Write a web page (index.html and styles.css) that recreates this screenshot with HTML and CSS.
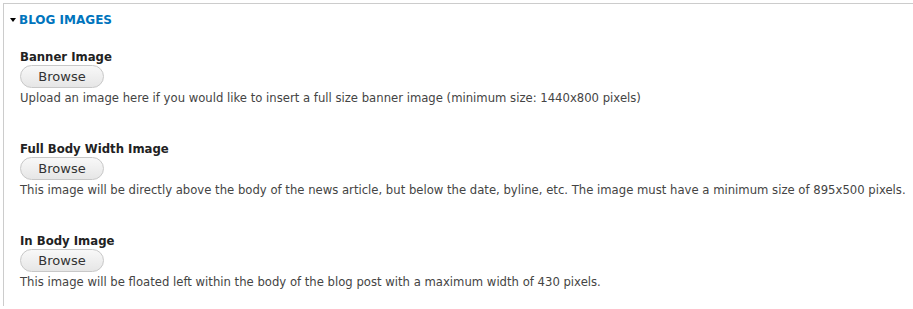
FILE: index.html
```html
<!DOCTYPE html>
<html>
<head>
<meta charset="utf-8">
<link rel="stylesheet" href="styles.css">
</head>
<body>
<div class="page">
  <details class="fieldset" open>
    <summary class="legend"><span class="arrow"></span>BLOG IMAGES</summary>
    <div class="wrapper">
      <div class="item">
        <label class="label">Banner Image</label>
        <button class="browse" type="button">Browse</button>
        <div class="desc">Upload an image here if you would like to insert a full size banner image (minimum size: 1440x800 pixels)</div>
      </div>
      <div class="item">
        <label class="label">Full Body Width Image</label>
        <button class="browse" type="button">Browse</button>
        <div class="desc">This image will be directly above the body of the news article, but below the date, byline, etc. The image must have a minimum size of 895x500 pixels.</div>
      </div>
      <div class="item">
        <label class="label">In Body Image</label>
        <button class="browse" type="button">Browse</button>
        <div class="desc">This image will be floated left within the body of the blog post with a maximum width of 430 pixels.</div>
      </div>
    </div>
  </details>
</div>
</body>
</html>
```
FILE: styles.css
```css
html, body {
  margin: 0;
  padding: 0;
  background: #fff;
}
body {
  font-family: "DejaVu Sans", "Noto Sans", sans-serif;
  color: #333;
  overflow: hidden;
  height: 309px;
}
.page {
  padding: 3px 0 0 3px;
  height: 306px;
  box-sizing: border-box;
}
.fieldset {
  border-top: 1px solid #ccc;
  border-left: 1px solid #ccc;
  height: 100%;
  box-sizing: border-box;
}
.legend {
  list-style: none;
  display: flex;
  align-items: center;
  height: 32px;
  padding-left: 6px;
  font-weight: bold;
  font-size: 12px;
  color: #0074bd;
  cursor: pointer;
}
.legend::-webkit-details-marker {
  display: none;
}
.arrow {
  width: 0;
  height: 0;
  border-left: 3.5px solid transparent;
  border-right: 3.5px solid transparent;
  border-top: 4px solid #000;
  margin-right: 3px;
}
.wrapper {
  padding: 13px 0 0 16px;
  display: flex;
  flex-direction: column;
  gap: 30px;
}
.item {
  display: flex;
  flex-direction: column;
  align-items: flex-start;
  height: 62px;
}
.label {
  font-weight: bold;
  font-size: 11.7px;
  color: #222;
  line-height: 16px;
}
.browse {
  width: 84px;
  height: 23px;
  border: 1px solid #c8c8c8;
  border-radius: 12px;
  background: linear-gradient(#f8f8f8, #e6e6e6);
  font-family: inherit;
  font-size: 13px;
  color: #333;
  padding: 0;
}
.desc {
  margin-top: 3px;
  font-size: 11.65px;
  color: #444;
  line-height: 15px;
  white-space: nowrap;
}
```
